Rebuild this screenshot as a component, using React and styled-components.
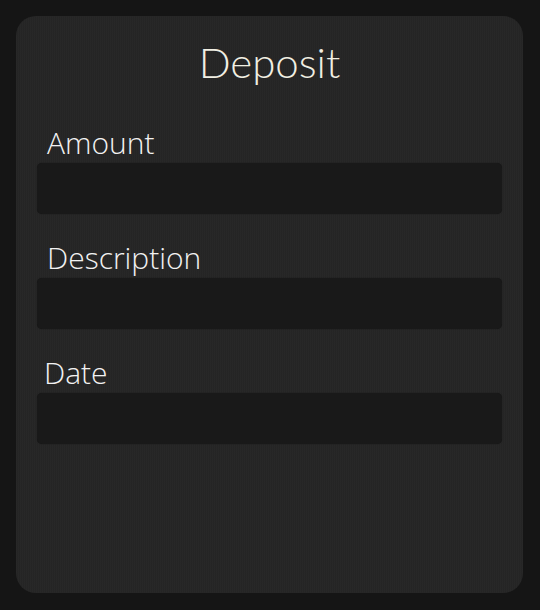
import React from "react";
import styled, { createGlobalStyle } from "styled-components";

const GlobalStyle = createGlobalStyle`
  html, body { margin: 0; padding: 0; background: #151515; }
  body { font-family: "Open Sans", "Noto Sans", sans-serif; }
  * { box-sizing: border-box; }
`;

const Page = styled.div`
  padding: 16px 17px 17px 16px;
  min-height: 610px;
`;

const Card = styled.form`
  display: flex;
  flex-direction: column;
  width: 507px;
  height: 577px;
  padding: 25px 21px 0 21px;
  border-radius: 20px;
  background-color: #252525;
  background-image: repeating-linear-gradient(
    90deg,
    rgba(255, 255, 255, 0.012) 0px,
    rgba(255, 255, 255, 0.012) 1px,
    rgba(0, 0, 0, 0.02) 1px,
    rgba(0, 0, 0, 0.02) 2px
  );
`;

const Title = styled.h1`
  margin: 0 0 44px 0;
  font-family: "Lato", "Open Sans", sans-serif;
  font-weight: 300;
  font-size: 42px;
  line-height: 42px;
  color: #f1efe3;
  text-align: center;
`;

const Fields = styled.div`
  display: flex;
  flex-direction: column;
  gap: 28px;
`;

const Field = styled.label`
  display: flex;
  flex-direction: column;
  gap: 5px;
`;

const LabelText = styled.span`
  padding-top: 1px;
  padding-left: ${(p) => p.$indent}px;
  font-family: "Open Sans", "Noto Sans", sans-serif;
  font-weight: 300;
  font-size: 30px;
  line-height: 30px;
  color: #f2f2f2;
`;

const Input = styled.input`
  display: block;
  width: 100%;
  height: 51px;
  border: none;
  outline: none;
  border-radius: 5px;
  background: #191919;
  box-shadow: 0 0 1px rgba(0, 0, 0, 0.6);
  color: #eee;
  font-family: "Open Sans", sans-serif;
  font-size: 20px;
  padding: 0 12px;
`;

const fields = [
  { label: "Amount", indent: 10, type: "text" },
  { label: "Description", indent: 10, type: "text" },
  { label: "Date", indent: 7, type: "text" },
];

export default function App() {
  return (
    <>
      <GlobalStyle />
      <Page>
        <Card onSubmit={(e) => e.preventDefault()}>
          <Title>Deposit</Title>
          <Fields>
            {fields.map((f) => (
              <Field key={f.label}>
                <LabelText $indent={f.indent}>{f.label}</LabelText>
                <Input type={f.type} />
              </Field>
            ))}
          </Fields>
        </Card>
      </Page>
    </>
  );
}
